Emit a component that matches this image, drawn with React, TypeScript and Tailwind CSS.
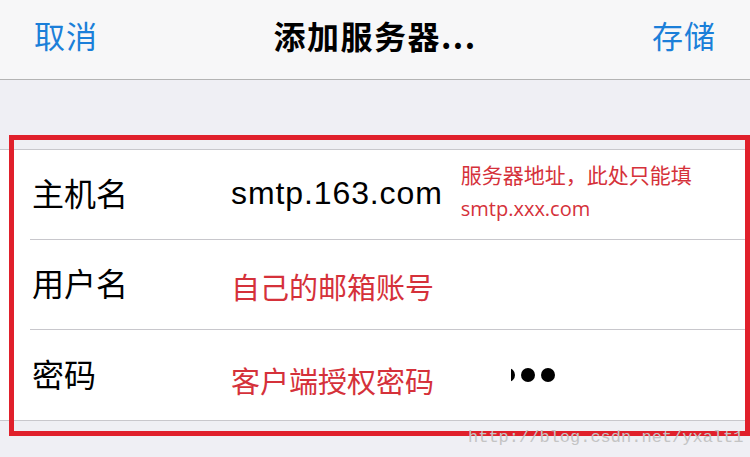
import React from 'react';

const cjk = { fontFamily: '"Noto Sans CJK SC", sans-serif' };
const latin = { fontFamily: '"Liberation Sans", "Noto Sans CJK SC", sans-serif' };

function Row({ label, children, last }: { label: string; children?: React.ReactNode; last?: boolean }) {
  return (
    <div className="flex h-[90px] pl-[30px]">
      <div className={`flex flex-1 items-center ${last ? '' : 'border-b border-[#c8c7cc]'}`}>
        <div className="w-[201px] pl-[2px] -mt-[5px] text-[32px] text-black leading-none" style={cjk}>
          {label}
        </div>
        <div className="flex flex-1 items-center h-full">{children}</div>
      </div>
    </div>
  );
}

export default function App() {
  return (
    <div className="relative w-[750px] h-[457px] overflow-hidden bg-[#efeff4]">
      {/* nav bar */}
      <div className="flex items-center justify-between h-[80px] px-[34px] pb-[10px] bg-[#f7f7f8] border-b border-[#b4b4b4]" style={cjk}>
        <span className="w-[64px] text-[31px] text-[#1b7fd9] leading-none tracking-[1px]">取消</span>
        <span className="text-[32px] font-semibold text-black leading-none tracking-[1.5px]">添加服务器...</span>
        <span className="w-[64px] text-[31px] text-[#1b7fd9] leading-none tracking-[1px]">存储</span>
      </div>

      <div className="h-[69px]" />

      {/* form */}
      <div className="bg-white border-t border-b border-[#c8c7cc]">
        <Row label="主机名">
          <span className="text-[32px] text-black tracking-[0.9px] leading-none -mt-[3px]" style={latin}>
            smtp.163.com
          </span>
          <div className="ml-[18px] flex flex-col gap-[14px] text-[#d5313a] leading-none -mt-[6px]">
            <span className="text-[21px]" style={cjk}>服务器地址，此处只能填</span>
            <span className="text-[20px] font-medium" style={{ fontFamily: '"Open Sans", sans-serif' }}>smtp.xxx.com</span>
          </div>
        </Row>
        <Row label="用户名">
          <span className="text-[29px] text-[#d5313a] leading-none mt-[4px]" style={cjk}>自己的邮箱账号</span>
        </Row>
        <Row label="密码" last>
          <span className="text-[29px] text-[#d5313a] leading-none mt-[10px] w-[280px]" style={cjk}>客户端授权密码</span>
          <div className="relative w-[46px] h-[16px] overflow-hidden">
            <div className="absolute left-[-10px] top-[1px] flex gap-[6px]">
              <span className="w-[14px] h-[14px] rounded-full bg-black" />
              <span className="w-[14px] h-[14px] rounded-full bg-black" />
              <span className="w-[14px] h-[14px] rounded-full bg-black" />
            </div>
          </div>
        </Row>
      </div>

      {/* annotation box */}
      <div className="absolute left-[9px] top-[135px] w-[741px] h-[301px] border-[5px] border-[#e0202b]" />

      {/* watermark */}
      <div
        className="absolute left-[468px] top-[429px] text-[17px] text-[#c4c4c4] leading-none"
        style={{ fontFamily: '"Liberation Mono", monospace' }}
      >
        http://blog.csdn.net/yxalt1
      </div>
    </div>
  );
}
